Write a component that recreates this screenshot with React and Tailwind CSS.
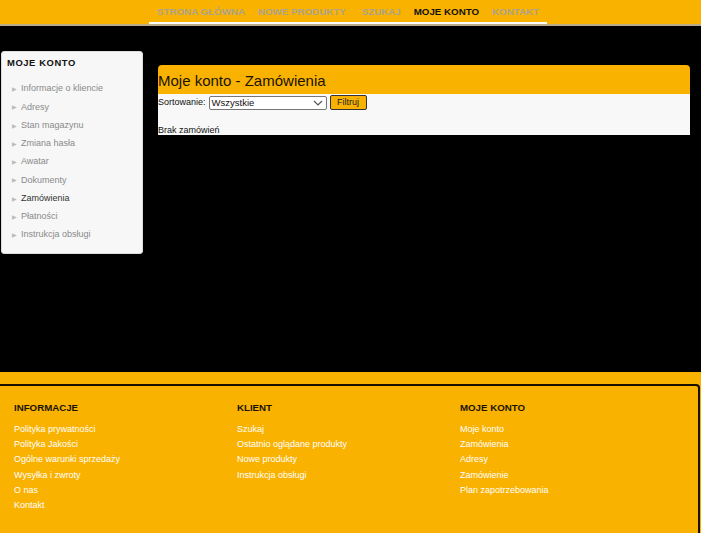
import React from 'react';

const navItems = [
    { label: 'STRONA GŁÓWNA' },
    { label: 'NOWE PRODUKTY' },
    { label: 'SZUKAJ' },
    { label: 'MOJE KONTO', active: true },
    { label: 'KONTAKT' },
];

const sideLinks = [
    'Informacje o kliencie',
    'Adresy',
    'Stan magazynu',
    'Zmiana hasła',
    'Awatar',
    'Dokumenty',
    'Zamówienia',
    'Płatności',
    'Instrukcja obsługi',
];

const footerCols = [
    {
        title: 'INFORMACJE',
        links: ['Polityka prywatności', 'Polityka Jakości', 'Ogólne warunki sprzedaży', 'Wysyłka i zwroty', 'O nas', 'Kontakt'],
    },
    {
        title: 'KLIENT',
        links: ['Szukaj', 'Ostatnio oglądane produkty', 'Nowe produkty', 'Instrukcja obsługi'],
    },
    {
        title: 'MOJE KONTO',
        links: ['Moje konto', 'Zamówienia', 'Adresy', 'Zamówienie', 'Plan zapotrzebowania'],
    },
];

const App = () => {
    return (
        <div className="min-h-[533px] flex flex-col bg-black font-['Liberation_Sans',Arial,sans-serif]">
            {/* top menu */}
            <header className="h-[26px] bg-[#f9b200] border-b-2 border-[#b9ab86] flex justify-center">
                <nav className="h-[24px] border-b-2 border-white flex items-start pt-[3px] px-[8px] gap-[13px] ml-[-5px]">
                    {navItems.map((item, index) => (
                        <a
                            key={index}
                            className={`text-[9.75px] font-bold leading-[18px] ${item.active ? 'text-[#111]' : 'text-[#aba38f]'} ${index === 2 ? 'ml-[3px]' : ''}`}
                        >
                            {item.label}
                        </a>
                    ))}
                </nav>
            </header>

            <div className="flex-1 flex items-start gap-[15px] pl-[1px] h-[346px]">
                {/* sidebar */}
                <aside className="mt-[25px] w-[142px] h-[203px] bg-[#f7f7f7] border border-[#dcdcdc] rounded-[3px] px-[5px] pt-[4px]">
                    <p className="text-[9.4px] font-bold tracking-[0.6px] text-[#111] leading-[14px]">MOJE KONTO</p>
                    <ul className="mt-[10px] pl-[5px]">
                        {sideLinks.map((link, index) => (
                            <li key={index} className="h-[18.25px] flex items-center gap-[4px]">
                                <span className="text-[6px] text-[#bbb] leading-none">▶</span>
                                <span className={`text-[9px] ${link === 'Zamówienia' ? 'text-[#333]' : 'text-[#8a8a8a]'}`}>{link}</span>
                            </li>
                        ))}
                    </ul>
                </aside>

                {/* content */}
                <main className="mt-[39px] w-[532px]">
                    <div className="h-[29px] bg-[#f9b200] rounded-t-[4px] flex items-center pt-[1px]">
                        <h1 className="text-[15px] text-[#1a1200] leading-none">Moje konto - Zamówienia</h1>
                    </div>
                    <div className="bg-[#f8f8f8] h-[41px] pt-[1px]">
                        <div className="flex items-center gap-[3px]">
                            <span className="text-[9px] text-[#111]">Sortowanie:</span>
                            <div className="w-[118px] h-[14px] bg-white border border-[#767676] rounded-[2px] flex items-center justify-between px-[2px]">
                                <span className="text-[9.5px] text-[#111] leading-none">Wszystkie</span>
                                <svg width="10" height="6" viewBox="0 0 10 6" className="mr-[1px]">
                                    <path d="M1 1l4 4 4-4" fill="none" stroke="#555" strokeWidth="1.2" />
                                </svg>
                            </div>
                            <button className="h-[15px] w-[37px] bg-[#f9b200] border border-[#333] rounded-[2px] text-[9px] text-[#222] leading-none">
                                Filtruj
                            </button>
                        </div>
                        <p className="mt-[14px] text-[9px] text-[#111] leading-[12px]">Brak zamówień</p>
                    </div>
                </main>
            </div>

            {/* footer */}
            <footer className="bg-[#f9b200] pt-[12px] h-[161px]">
                <div className="h-full border-t-2 border-r-2 border-[#1c1100] rounded-tr-[4px] mr-[1px] px-[14px] pt-[16px] flex">
                    {footerCols.map((col, index) => (
                        <div key={index} className="w-[223px]">
                            <p className="text-[9.7px] font-bold text-[#1a1200] leading-[12px]">{col.title}</p>
                            <ul className="mt-[8px]">
                                {col.links.map((link, i) => (
                                    <li key={i} className="h-[15.2px] text-[9px] text-white leading-[15px]">{link}</li>
                                ))}
                            </ul>
                        </div>
                    ))}
                </div>
            </footer>
        </div>
    );
};

export default App;
